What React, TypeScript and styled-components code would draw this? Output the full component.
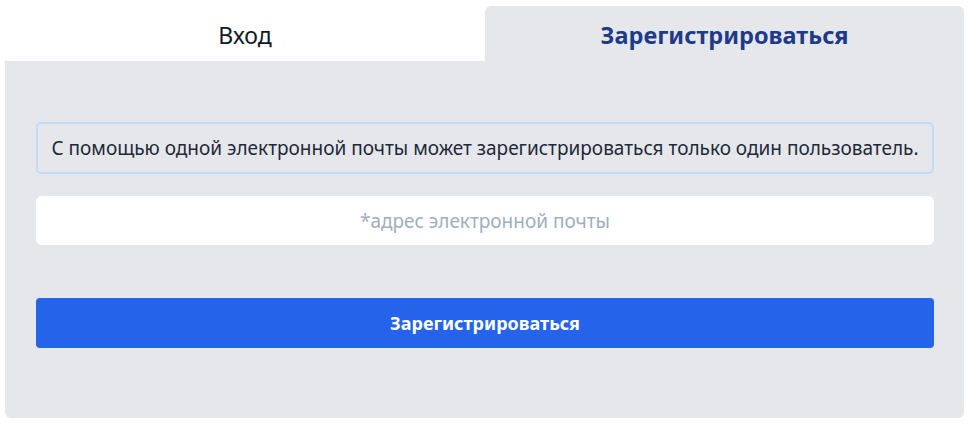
import React from "react";
import styled, { createGlobalStyle } from "styled-components";

const Global = createGlobalStyle`
  html, body { margin: 0; padding: 0; background: #ffffff; }
  body { font-family: "Noto Sans", "Open Sans", sans-serif; }
  * { box-sizing: border-box; }
`;

const Page = styled.div`
  padding: 6px 5px 0 5px;
`;

const Tabs = styled.div`
  display: grid;
  grid-template-columns: 480px 1fr;
  height: 55px;
`;

const Tab = styled.button<{ $active?: boolean }>`
  border: none;
  margin: 0;
  padding: 2px 0 0 0;
  display: flex;
  align-items: center;
  justify-content: center;
  font-family: "Noto Sans", sans-serif;
  background: ${(p) => (p.$active ? "#e5e7eb" : "#ffffff")};
  color: ${(p) => (p.$active ? "#1e3a8a" : "#111827")};
  font-weight: ${(p) => (p.$active ? 700 : 400)};
  font-size: ${(p) => (p.$active ? "23.5px" : "23px")};
  border-radius: ${(p) => (p.$active ? "6px 6px 0 0" : "0")};
  cursor: pointer;
`;

const Body = styled.div`
  background: #e5e7eb;
  border-radius: 0 0 6px 6px;
  padding: 61px 30px 70px 31px;
  display: flex;
  flex-direction: column;
`;

const Notice = styled.div`
  height: 52px;
  border: 2px solid #bfdbfe;
  border-radius: 5px;
  display: flex;
  align-items: center;
  justify-content: center;
  font-size: 19px;
  color: #1f2937;
`;

const Input = styled.input`
  margin-top: 22px;
  height: 49px;
  border: none;
  border-radius: 6px;
  background: #ffffff;
  text-align: center;
  font-family: "Noto Sans", sans-serif;
  font-size: 19px;
  outline: none;
  &::placeholder { color: #a0aec0; }
`;

const Submit = styled.button`
  margin-top: 53px;
  height: 50px;
  border: none;
  border-radius: 4px;
  background: #2563eb;
  color: #ffffff;
  font-family: "Noto Sans", sans-serif;
  font-weight: 700;
  font-size: 18px;
  cursor: pointer;
`;

export default function App() {
  return (
    <>
      <Global />
      <Page>
        <Tabs>
          <Tab>Вход</Tab>
          <Tab $active>Зарегистрироваться</Tab>
        </Tabs>
        <Body>
          <Notice>С помощью одной электронной почты может зарегистрироваться только один пользователь.</Notice>
          <Input placeholder="*адрес электронной почты" />
          <Submit>Зарегистрироваться</Submit>
        </Body>
      </Page>
    </>
  );
}
